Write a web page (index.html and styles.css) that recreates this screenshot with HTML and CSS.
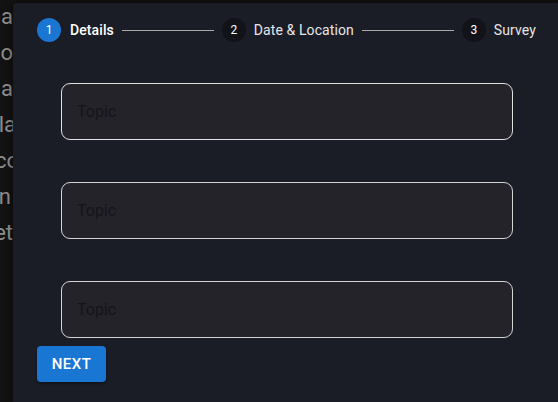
FILE: index.html
```html
<!DOCTYPE html>
<html lang="en">
<head>
<meta charset="utf-8">
<title>Stepper</title>
<link rel="stylesheet" href="styles.css">
</head>
<body>
<div class="page">
  <div class="backdrop">
    <div class="bg-line"><span>na</span></div>
    <div class="bg-line"><span>o</span></div>
    <div class="bg-line"><span>a</span></div>
    <div class="bg-line bg-line-long"><span>ela</span></div>
    <div class="bg-line bg-line-longer"><span>co</span></div>
    <div class="bg-line bg-line-short"><span>n</span></div>
    <div class="bg-line"><span>et</span></div>
  </div>
  <div class="dialog">
    <div class="stepper">
      <div class="step active">
        <span class="step-icon">1</span>
        <span class="step-label">Details</span>
      </div>
      <div class="connector"></div>
      <div class="step">
        <span class="step-icon">2</span>
        <span class="step-label">Date &amp; Location</span>
      </div>
      <div class="connector"></div>
      <div class="step">
        <span class="step-icon">3</span>
        <span class="step-label">Survey</span>
      </div>
    </div>
    <div class="fields">
      <div class="field first"><span class="placeholder">Topic</span></div>
      <div class="field"><span class="placeholder">Topic</span></div>
      <div class="field"><span class="placeholder">Topic</span></div>
    </div>
    <div class="actions">
      <button class="btn-next" type="button">NEXT</button>
    </div>
  </div>
</div>
</body>
</html>
```

FILE: styles.css
```css
html, body {
  margin: 0;
  padding: 0;
  background: #121212;
  font-family: Roboto, "Liberation Sans", sans-serif;
  height: 100%;
  overflow: hidden;
}

.page {
  display: flex;
  width: 558px;
  height: 402px;
  background: #121212;
}

.backdrop {
  width: 19px;
  flex: none;
  overflow: hidden;
  margin-top: -1px;
}

.bg-line {
  display: flex;
  justify-content: flex-end;
  white-space: nowrap;
  font-size: 22px;
  line-height: 36px;
  color: #8d8d8d;
  padding-right: 6px;
}

.bg-line-long {
  padding-right: 3px;
}

.bg-line-longer {
  padding-right: 0;
}

.bg-line-short {
  padding-right: 8px;
}

.dialog {
  flex: 1;
  position: relative;
  margin-left: -6px;
  margin-top: 3px;
  background: #1b1d26;
  border-radius: 4px 0 0 0;
  box-shadow: 0 0 6px rgba(0, 0, 0, 0.6);
  padding: 15px 14px 0 16px;
  display: flex;
  flex-direction: column;
}

.stepper {
  display: flex;
  align-items: center;
  height: 24px;
}

.step {
  display: flex;
  align-items: center;
  padding: 0 8px;
}

.step-icon {
  width: 24px;
  height: 24px;
  border-radius: 50%;
  background: #121318;
  color: #ffffff;
  font-size: 12px;
  display: flex;
  align-items: center;
  justify-content: center;
  margin-right: 8px;
}

.step.active .step-icon {
  background: #1976d2;
}

.step-label {
  font-size: 14px;
  color: #e6e6e6;
  letter-spacing: 0.1px;
}

.step.active .step-label {
  font-weight: 500;
  color: #ffffff;
  margin-left: 1px;
}

.connector {
  flex: 1;
  height: 1px;
  background: #a9a9a9;
}

.fields {
  display: flex;
  flex-direction: column;
  gap: 42px;
  margin-top: 41px;
  padding-left: 32px;
}

.field {
  box-sizing: border-box;
  width: 452px;
  height: 57px;
  border: 1px solid #d4d4d4;
  border-radius: 9px;
  background: #232329;
  display: flex;
  align-items: center;
  padding-left: 15px;
}

.field.first {
  border-color: #e0e0e0;
}

.placeholder {
  font-size: 16px;
  color: #151519;
}

.actions {
  display: flex;
  margin-top: 8px;
  padding-left: 8px;
}

.btn-next {
  width: 69px;
  height: 36px;
  border: none;
  border-radius: 4px;
  background: #1976d2;
  color: #ffffff;
  font-family: Roboto, "Liberation Sans", sans-serif;
  font-size: 15px;
  font-weight: 500;
  letter-spacing: 0.5px;
  box-shadow: 0 2px 3px rgba(0, 0, 0, 0.35);
  padding: 0;
  cursor: pointer;
}
```
